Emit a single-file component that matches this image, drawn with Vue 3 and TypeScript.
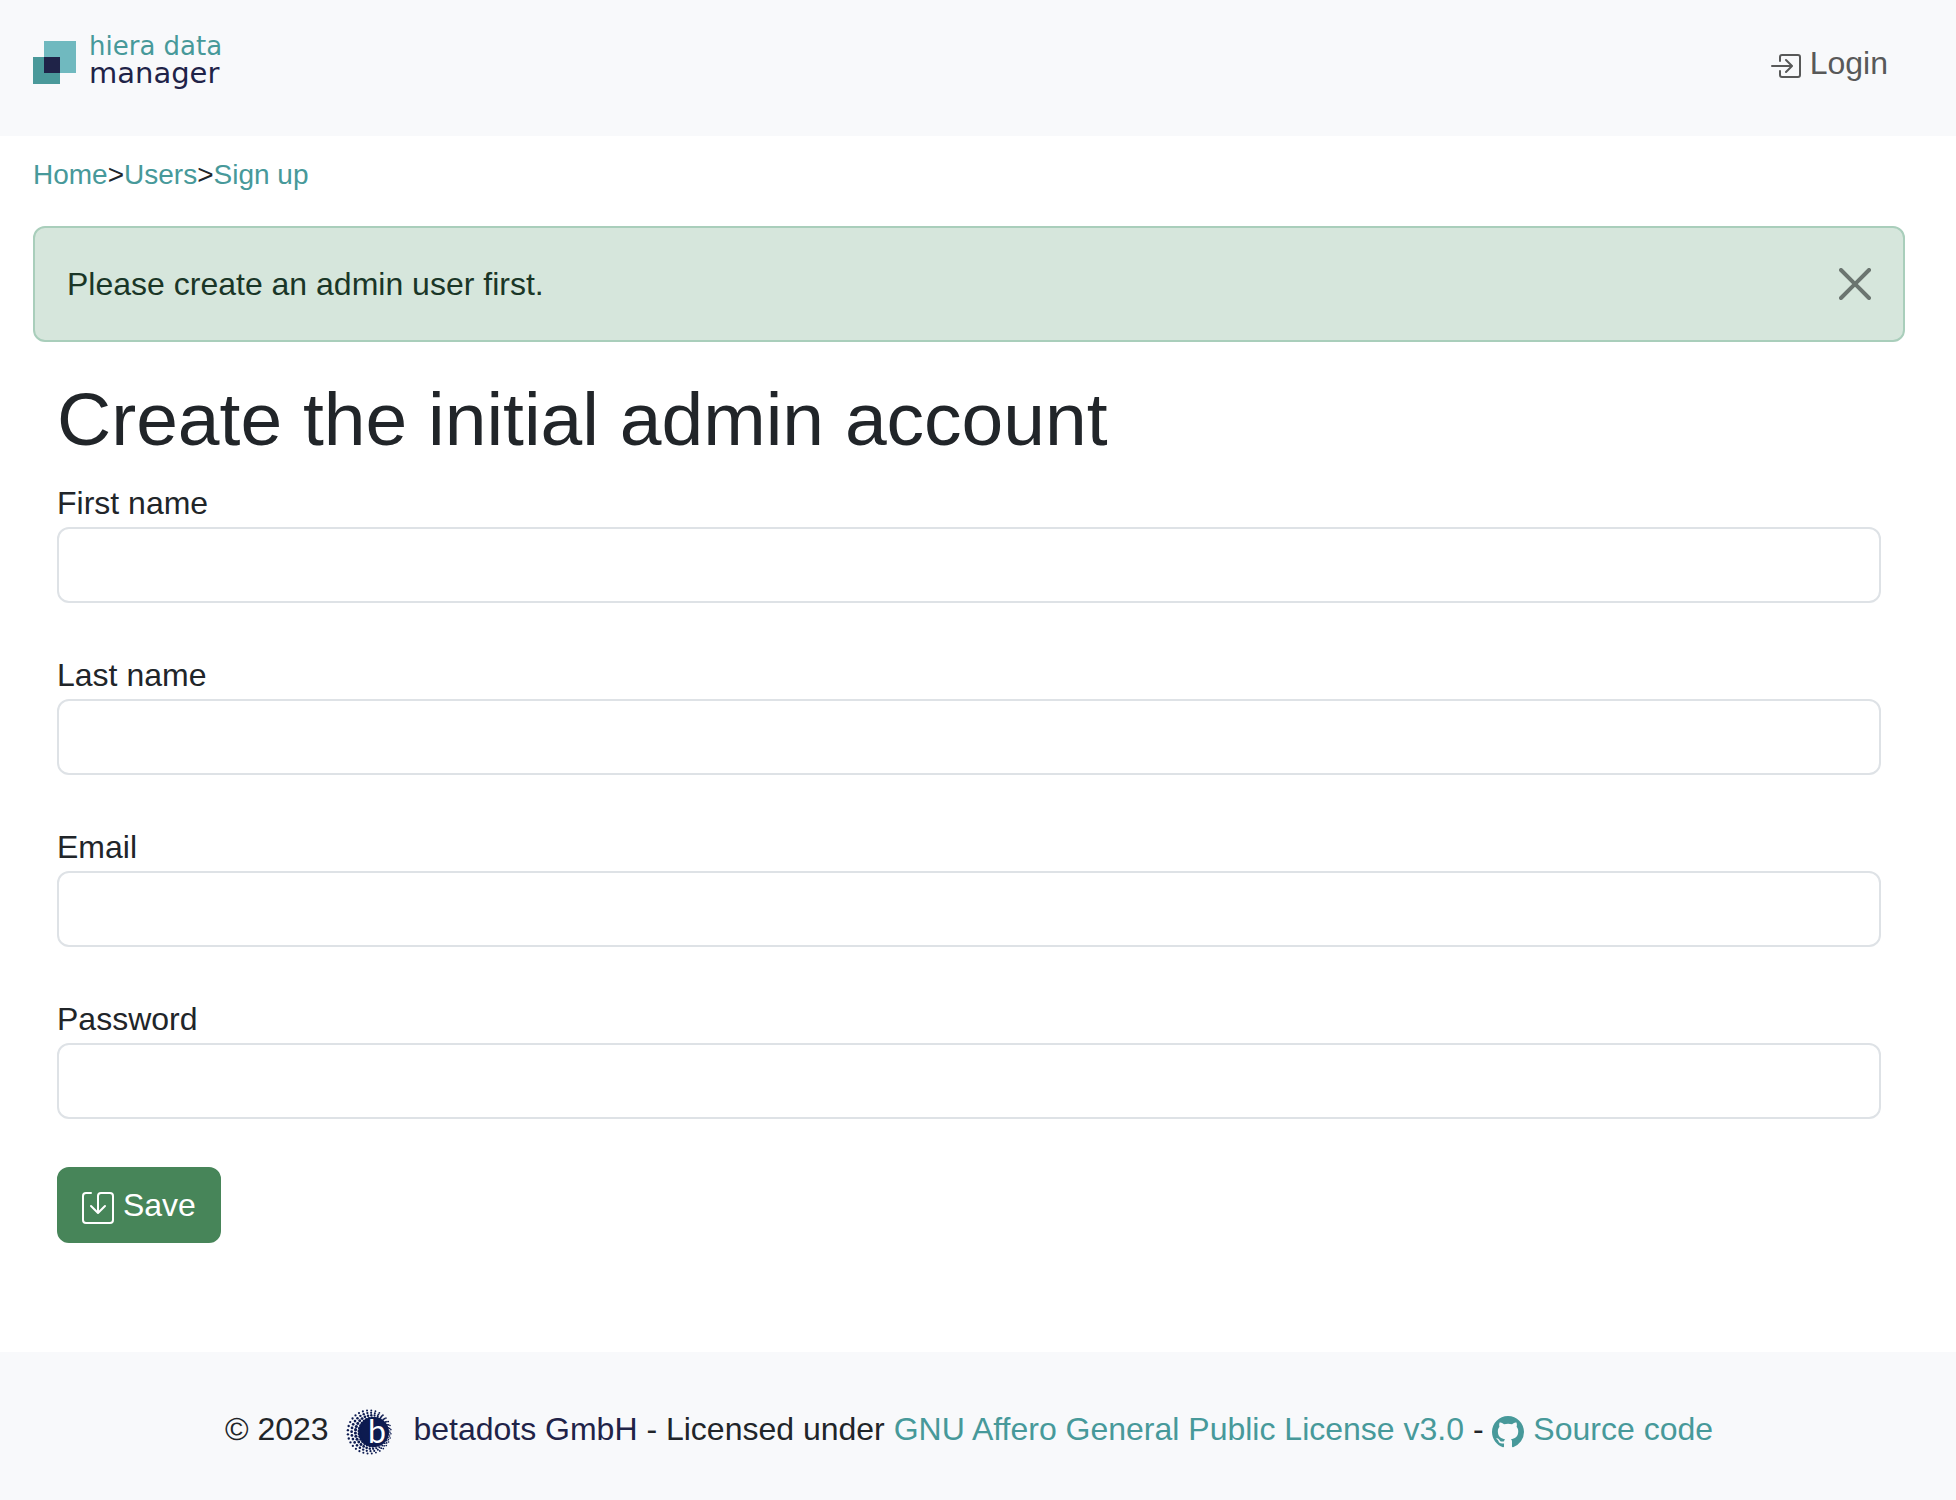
<script setup lang="ts">
import { ref } from 'vue'

interface Field {
  id: string
  label: string
  type: string
}

interface Dot {
  x: number
  y: number
  r: number
}

const fields: Field[] = [
  { id: 'first-name', label: 'First name', type: 'text' },
  { id: 'last-name', label: 'Last name', type: 'text' },
  { id: 'email', label: 'Email', type: 'email' },
  { id: 'password', label: 'Password', type: 'password' },
]

const noticeVisible = ref(true)

// Halftone rings around the betadots globe: they spread out to the left
// and close up towards the right edge.
const dots: Dot[] = []
const dotsPerRing = 32
for (let ring = 1; ring <= 4; ring++) {
  for (let i = 0; i < dotsPerRing; i++) {
    const angle = ((i + ring * 0.36) / dotsPerRing) * Math.PI * 2
    const radius = 12 + ring * 2.4
    const leftness = (1 - Math.cos(angle)) / 2
    dots.push({
      x: 29 - ring * 1.4 + Math.cos(angle) * radius,
      y: 24 + Math.sin(angle) * radius,
      r: 0.8 + leftness * (1.1 - ring * 0.18),
    })
  }
}
</script>

<template>
  <div class="page">
    <header class="topbar">
      <a class="brand" href="#" aria-label="hiera data manager">
        <svg class="brand-mark" viewBox="0 0 43 43" aria-hidden="true">
          <rect x="11" width="32" height="32" fill="#70b9bf" />
          <rect y="16" width="27" height="27" fill="#4a999a" />
          <rect x="11" y="16" width="16" height="16" fill="#1f2348" />
        </svg>
        <span class="brand-name">
          <span class="brand-top">hiera data</span>
          <span class="brand-bottom">manager</span>
        </span>
      </a>
      <a class="login" href="#">
        <svg class="icon" viewBox="0 0 16 16" aria-hidden="true">
          <path d="M6 3.5a.5.5 0 0 1 .5-.5h8a.5.5 0 0 1 .5.5v9a.5.5 0 0 1-.5.5h-8a.5.5 0 0 1-.5-.5v-2a.5.5 0 0 0-1 0v2A1.5 1.5 0 0 0 6.5 14h8a1.5 1.5 0 0 0 1.5-1.5v-9A1.5 1.5 0 0 0 14.5 2h-8A1.5 1.5 0 0 0 5 3.5v2a.5.5 0 0 0 1 0z" />
          <path d="M11.854 8.354a.5.5 0 0 0 0-.708l-3-3a.5.5 0 1 0-.708.708L10.293 7.5H1.5a.5.5 0 0 0 0 1h8.793l-2.147 2.146a.5.5 0 0 0 .708.708z" />
        </svg>
        Login
      </a>
    </header>

    <main class="content">
      <nav class="crumbs" aria-label="Breadcrumb">
        <a href="#">Home</a><span>&gt;</span><a href="#">Users</a><span>&gt;</span><a href="#">Sign up</a>
      </nav>

      <div v-if="noticeVisible" class="notice" role="alert">
        <span>Please create an admin user first.</span>
        <button class="close" type="button" aria-label="Close" @click="noticeVisible = false">
          <svg viewBox="0 0 16 16" aria-hidden="true">
            <path d="M.293.293a1 1 0 0 1 1.414 0L8 6.586 14.293.293a1 1 0 1 1 1.414 1.414L9.414 8l6.293 6.293a1 1 0 0 1-1.414 1.414L8 9.414l-6.293 6.293a1 1 0 0 1-1.414-1.414L6.586 8 .293 1.707a1 1 0 0 1 0-1.414" />
          </svg>
        </button>
      </div>

      <form class="account" @submit.prevent>
        <h1>Create the initial admin account</h1>
        <div v-for="field in fields" :key="field.id" class="field">
          <label :for="field.id">{{ field.label }}</label>
          <input :id="field.id" :type="field.type" />
        </div>
        <button class="save" type="submit">
          <svg class="icon" viewBox="0 0 16 16" aria-hidden="true">
            <path d="M2 1a1 1 0 0 0-1 1v12a1 1 0 0 0 1 1h12a1 1 0 0 0 1-1V2a1 1 0 0 0-1-1H9.5a1 1 0 0 0-1 1v7.293l2.646-2.647a.5.5 0 0 1 .708.708l-3.5 3.5a.5.5 0 0 1-.708 0l-3.5-3.5a.5.5 0 1 1 .708-.708L7.5 9.293V2a2 2 0 0 1 2-2H14a2 2 0 0 1 2 2v12a2 2 0 0 1-2 2H2a2 2 0 0 1-2-2V2a2 2 0 0 1 2-2h2.5a.5.5 0 0 1 0 1z" />
          </svg>
          Save
        </button>
      </form>
    </main>

    <footer class="footer">
      © 2023
      <a class="company" href="#">
        <svg class="globe" viewBox="0 0 48 48" aria-hidden="true">
          <g fill="#0d1b50">
            <circle cx="28" cy="24" r="15" />
            <circle v-for="(dot, i) in dots" :key="i" :cx="dot.x" :cy="dot.y" :r="dot.r" />
          </g>
          <text x="22" y="35" class="globe-letter">b</text>
        </svg>
        betadots GmbH</a>
      - Licensed under
      <a href="#">GNU Affero General Public License v3.0</a>
      -
      <a href="#">
        <svg class="icon" viewBox="0 0 16 16" aria-hidden="true">
          <path d="M8 0C3.58 0 0 3.58 0 8c0 3.54 2.29 6.53 5.47 7.59.4.07.55-.17.55-.38 0-.19-.01-.82-.01-1.49-2.01.37-2.53-.49-2.69-.94-.09-.23-.48-.94-.82-1.13-.28-.15-.68-.52-.01-.53.63-.01 1.08.58 1.23.82.72 1.21 1.87.87 2.33.66.07-.52.28-.87.51-1.07-1.78-.2-3.64-.89-3.64-3.95 0-.87.31-1.59.82-2.15-.08-.2-.36-1.02.08-2.12 0 0 .67-.21 2.2.82.64-.18 1.32-.27 2-.27s1.36.09 2 .27c1.53-1.04 2.2-.82 2.2-.82.44 1.1.16 1.92.08 2.12.51.56.82 1.27.82 2.15 0 3.07-1.87 3.75-3.65 3.95.29.25.54.73.54 1.48 0 1.07-.01 1.93-.01 2.2 0 .21.15.46.55.38A8.01 8.01 0 0 0 16 8c0-4.42-3.58-8-8-8" />
        </svg>
        Source code</a>
    </footer>
  </div>
</template>

<style>
body {
  margin: 0;
  background: #fff;
}
</style>

<style scoped>
.page {
  display: flex;
  flex-direction: column;
  min-height: 100vh;
  color: #212529;
  font-family: "Liberation Sans", Arial, sans-serif;
  font-size: 32px;
  line-height: 48px;
}

*,
*::before,
*::after {
  box-sizing: border-box;
}

a {
  color: #47999a;
  text-decoration: none;
}

.icon {
  width: 32px;
  height: 32px;
  fill: currentColor;
  vertical-align: -8px;
}

.topbar {
  display: flex;
  justify-content: space-between;
  align-items: flex-start;
  height: 136px;
  padding: 33px 68px 0 33px;
  background: #f8f9fb;
}

.brand {
  display: flex;
  gap: 13px;
  font-family: "DejaVu Sans", sans-serif;
  line-height: 27px;
}

.brand-mark {
  width: 43px;
  height: 43px;
  margin-top: 8px;
}

.brand-name {
  display: flex;
  flex-direction: column;
}

.brand-top {
  font-size: 26px;
}

.brand-bottom {
  color: #1f2348;
  font-size: 29px;
}

.login {
  margin-top: 6px;
  color: #585959;
}

.content {
  padding: 18px 51px 109px 33px;
}

.crumbs {
  margin-bottom: 30px;
  font-size: 28px;
  line-height: 42px;
}

.notice {
  display: flex;
  justify-content: space-between;
  align-items: center;
  margin-bottom: 33px;
  padding: 32px;
  border: 2px solid #a9cebb;
  border-radius: 12px;
  background: #d6e6dc;
  color: #1a3627;
}

.close {
  display: flex;
  padding: 0;
  border: 0;
  background: none;
  color: #6b7570;
  cursor: pointer;
}

.close svg {
  width: 32px;
  height: 32px;
  fill: currentColor;
}

.account {
  padding: 0 24px;
}

h1 {
  margin: 0 0 16px;
  font-size: 75px;
  font-weight: 400;
  line-height: 88px;
}

.field {
  display: flex;
  flex-direction: column;
  margin-bottom: 48px;
}

.field input {
  width: 100%;
  height: 76px;
  padding: 12px 24px;
  border: 2px solid #dee2e6;
  border-radius: 12px;
  background: #fff;
  color: inherit;
  font: inherit;
}

.save {
  display: block;
  padding: 12px 23px;
  border: 2px solid #478559;
  border-radius: 12px;
  background: #478559;
  color: #fff;
  font: inherit;
  cursor: pointer;
}

.footer {
  margin-top: auto;
  padding: 53px 51px 44px 33px;
  background: #f8f9fb;
  text-align: center;
}

.company {
  color: #1f2348;
}

.globe {
  width: 48px;
  height: 48px;
  margin: 0 11px 0 8px;
  vertical-align: -16px;
}

.globe-letter {
  fill: #fff;
  font-family: Lato, sans-serif;
  font-size: 32px;
}
</style>
